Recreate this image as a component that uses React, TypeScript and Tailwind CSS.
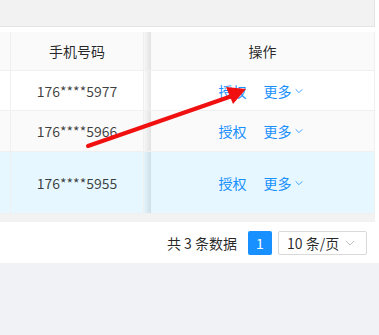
const rows = [
  { phone: "176****5977", bg: "bg-white", h: "h-[40px]" },
  { phone: "176****5966", bg: "bg-[#fafafa]", h: "h-[41px]" },
  { phone: "176****5955", bg: "bg-[#e6f7ff]", h: "h-[62px]" },
];

const font = { fontFamily: '"Noto Sans CJK SC", sans-serif' };

function Chevron({ className }: { className?: string }) {
  return (
    <svg viewBox="0 0 12 12" className={className} fill="none" stroke="currentColor" strokeWidth={1}>
      <path d="M2 4l4 4 4-4" />
    </svg>
  );
}

export default function App() {
  return (
    <div className="relative w-[379px] h-[335px] bg-[#f0f2f5] overflow-hidden text-sm" style={font}>
      <div className="bg-white">
        <div className="w-[375px]">
          {/* 上部 */}
          <div className="h-[27px] bg-[#f2f2f2] border-b border-r border-[#e4e4e4]" />
          <div className="h-[5px]" />

          {/* ヘッダー */}
          <div className="flex h-[39px] bg-[#fafafa] border-b border-r border-[#f0f0f0] text-[rgba(0,0,0,0.85)]">
            <div className="w-[11px] border-r border-[#f0f0f0]" />
            <div className="w-[133px] border-r border-[#f0f0f0] flex items-center justify-center">手机号码</div>
            <div className="w-[7px]" />
            <div className="relative flex-1 flex items-center justify-center">
              <div className="absolute left-[-8px] top-0 bottom-0 w-[8px] bg-gradient-to-r from-transparent to-black/10" />
              操作
            </div>
          </div>

          {/* 行 */}
          {rows.map((r) => (
            <div key={r.phone} className={`flex ${r.h} ${r.bg} border-b border-r border-[#f0f0f0] text-[rgba(0,0,0,0.75)]`}>
              <div className="w-[11px] border-r border-[#f0f0f0]" />
              <div className="w-[133px] border-r border-[#f0f0f0] flex items-center justify-center">{r.phone}</div>
              <div className="w-[7px]" />
              <div className="relative flex-1 flex items-center justify-center pr-[3px] text-[#1890ff]">
                <div className="absolute left-[-8px] top-0 bottom-0 w-[8px] bg-gradient-to-r from-transparent to-black/10" />
                <span>授权</span>
                <span className="ml-[17px]">更多</span>
                <Chevron className="w-[10px] h-[10px] ml-[2px]" />
              </div>
            </div>
          ))}

          <div className="h-[8px] bg-[#f2f2f2]" />
        </div>

        {/* ページネーション */}
        <div className="h-[41px] flex items-center justify-end pr-[12px] text-[rgba(0,0,0,0.85)]">
          <span>共 3 条数据</span>
          <div className="ml-[11px] w-[24px] h-[24px] rounded-[2px] bg-[#1890ff] text-white flex items-center justify-center">1</div>
          <div className="ml-[6px] w-[89px] h-[24px] rounded-[2px] border border-[#d9d9d9] flex items-center pl-[8px] pr-[10px]">
            <span className="flex-1">10 条/页</span>
            <Chevron className="w-[12px] h-[12px] text-[#bfbfbf]" />
          </div>
        </div>
      </div>

      {/* 赤い矢印 */}
      <svg className="absolute inset-0 pointer-events-none" width="379" height="335">
        <line x1="88" y1="146" x2="232" y2="96" stroke="#f01010" strokeWidth="4" strokeLinecap="round" />
        <polygon points="246,89 226,87 233,104" fill="#f01010" />
      </svg>
    </div>
  );
}
